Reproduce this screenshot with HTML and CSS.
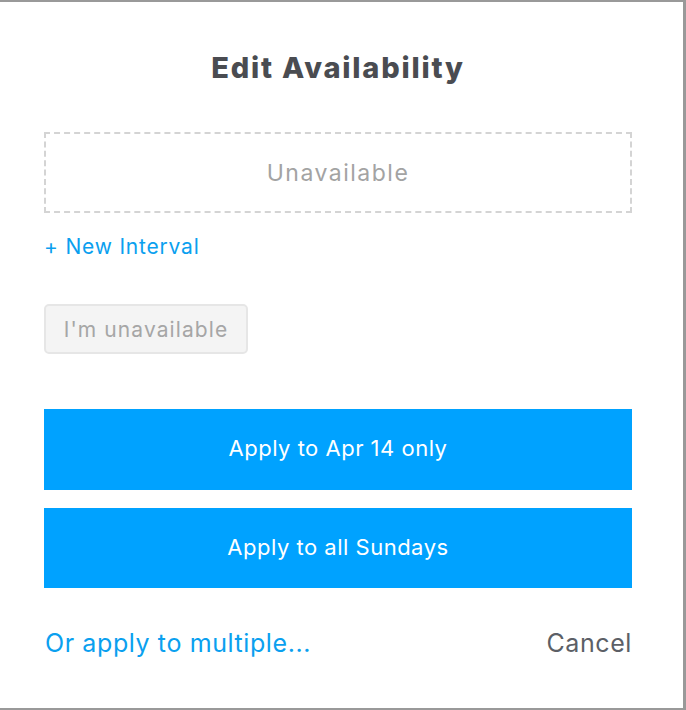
FILE: index.html
```html
<!DOCTYPE html>
<html>
<head>
<meta charset="utf-8">
<link rel="stylesheet" href="styles.css">
</head>
<body>
<div class="modal">
  <h1 class="title">Edit Availability</h1>
  <div class="intervals">Unavailable</div>
  <a class="new-interval">+ New Interval</a>
  <button class="unavail">I'm unavailable</button>
  <div class="actions">
    <button class="primary">Apply to Apr 14 only</button>
    <button class="primary">Apply to all Sundays</button>
  </div>
  <div class="footer">
    <a class="multiple">Or apply to multiple...</a>
    <a class="cancel">Cancel</a>
  </div>
</div>
</body>
</html>
```
FILE: styles.css
```css
html, body {
  margin: 0;
  padding: 0;
  background: #fff;
}
body {
  font-family: Inter, Lato, sans-serif;
}
.modal {
  box-sizing: border-box;
  width: 686px;
  height: 710px;
  border-top: 2px solid #999;
  border-right: 3px solid #999;
  border-bottom: 2px solid #999;
  padding: 0 51px 0 44px;
  display: flex;
  flex-direction: column;
}
.title {
  margin: 48px 0 0;
  text-align: center;
  font-size: 29px;
  font-weight: 800;
  letter-spacing: 1.8px;
  color: #4a4c51;
  line-height: 36px;
}
.intervals {
  margin-top: 46px;
  height: 81px;
  box-sizing: border-box;
  border: 2px dashed #d4d4d4;
  display: flex;
  align-items: center;
  justify-content: center;
  font-size: 23px;
  letter-spacing: 1.5px;
  color: #a3a3a3;
  padding-top: 1px;
}
.new-interval {
  margin-top: 22px;
  font-size: 21px;
  letter-spacing: 0.8px;
  color: #0aa0ef;
  line-height: 24px;
}
.unavail {
  margin-top: 45px;
  align-self: flex-start;
  width: 204px;
  height: 50px;
  background: #f4f4f4;
  border: 2px solid #e6e6e6;
  border-radius: 5px;
  font-family: inherit;
  font-size: 21px;
  letter-spacing: 1.1px;
  color: #a6a6a6;
  padding: 0;
}
.actions {
  margin-top: 55px;
  display: flex;
  flex-direction: column;
  gap: 18px;
}
.primary {
  height: 81px;
  border: none;
  background: #00a2ff;
  color: #fff;
  font-family: inherit;
  font-size: 22px;
  letter-spacing: 0.5px;
  padding: 0 0 3px;
}
.actions .primary + .primary {
  height: 80px;
}
.footer {
  margin-top: 40px;
  display: flex;
  justify-content: space-between;
  align-items: center;
  font-size: 25px;
  letter-spacing: 0.6px;
  line-height: 30px;
}
.multiple {
  color: #0aa0ef;
  margin-left: 1px;
}
.cancel {
  color: #5c5f66;
}
```
